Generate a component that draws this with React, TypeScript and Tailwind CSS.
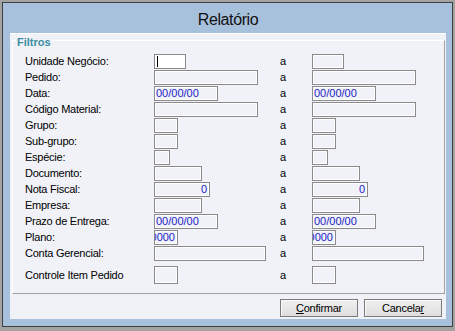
type Field = {
  label: string;
  width: number;
  value?: string;
  align?: "left" | "right";
  focused?: boolean;
};

const fields: Field[] = [
  { label: "Unidade Negócio:", width: 32, focused: true },
  { label: "Pedido:", width: 104 },
  { label: "Data:", width: 64, value: "00/00/00" },
  { label: "Código Material:", width: 104 },
  { label: "Grupo:", width: 24 },
  { label: "Sub-grupo:", width: 24 },
  { label: "Espécie:", width: 16 },
  { label: "Documento:", width: 48 },
  { label: "Nota Fiscal:", width: 56, value: "0", align: "right" },
  { label: "Empresa:", width: 48 },
  { label: "Prazo de Entrega:", width: 64, value: "00/00/00" },
  { label: "Plano:", width: 24, value: "0000", align: "right" },
  { label: "Conta Gerencial:", width: 112 },
];

function Box({
  width,
  value,
  align,
  focused,
  showCaret,
  tall,
}: {
  width: number;
  value?: string;
  align?: "left" | "right";
  focused?: boolean;
  showCaret?: boolean;
  tall?: boolean;
}) {
  return (
    <div
      style={{ width }}
      className={`flex items-center overflow-hidden border border-[#8a8a8a] shadow-[inset_1px_1px_0_#ffffff,inset_-1px_-1px_0_#ffffff] ${
        tall ? "h-[18px]" : "h-[15px]"
      } ${focused ? "bg-white" : ""} ${
        align === "right" ? "justify-end pr-[2px]" : "justify-start pl-[1px]"
      }`}
    >
      {showCaret && <div className="ml-[1px] h-[11px] w-[1px] shrink-0 bg-black" />}
      {value && (
        <span className="shrink-0 whitespace-nowrap leading-none tracking-normal text-[#2222c8]">
          {value}
        </span>
      )}
    </div>
  );
}

export default function App() {
  return (
    <div className="h-[331px] w-[455px] bg-[#a3a3a3] pb-[4px] pl-[2px] pr-[2px] pt-[2px] font-['Liberation_Sans',Arial,sans-serif] text-[11px] tracking-[-0.25px] text-black">
      <div className="flex h-full flex-col border border-[#404040] bg-[#a7c0dc] pl-[7px] pr-[6px]">
        {/* title */}
        <div className="flex h-[30px] shrink-0 items-center justify-center pt-[4px] text-[16px] tracking-[-0.4px] text-[#111]">
          Relatório
        </div>

        {/* panel */}
        <div className="flex h-[286px] flex-col border-t border-white bg-[#f1f2f8]">
          {/* group box */}
          <div className="relative ml-[2px] mr-[1px] mt-[6px] h-[254px] border-b border-l border-r border-t border-b-[#a0a0a0] border-l-white border-r-[#a0a0a0] border-t-white pb-[9px] pl-[12px] pt-[13px]">
            <div className="absolute -top-[4px] left-[3px] bg-[#f1f2f8] px-[1px] text-[11px] font-bold leading-[11px] tracking-normal text-[#3a8fa0]">
              Filtros
            </div>

            <div className="flex flex-col">
              {fields.map((f) => (
                <div key={f.label} className="flex h-[16px] items-start">
                  <div className="flex h-[15px] w-[129px] items-center leading-none">
                    {f.label}
                  </div>
                  <div className="w-[126px]">
                    <Box
                      width={f.width}
                      value={f.value}
                      align={f.align}
                      focused={f.focused}
                      showCaret={f.focused}
                    />
                  </div>
                  <div className="flex h-[15px] w-[32px] items-center leading-none">a</div>
                  <Box width={f.width} value={f.value} align={f.align} />
                </div>
              ))}

              <div className="mt-[4px] flex h-[18px] items-center">
                <div className="w-[129px] leading-none">Controle Item Pedido</div>
                <div className="w-[126px]">
                  <Box width={24} tall />
                </div>
                <div className="w-[32px] leading-none">a</div>
                <Box width={24} tall />
              </div>
            </div>
          </div>

          {/* buttons */}
          <div className="mt-[5px] flex justify-end gap-[6px] pr-[4px]">
            <button className="flex h-[18px] w-[78px] items-center justify-center border border-[#7a7a7a] bg-gradient-to-b from-[#f0f0f0] to-[#dedede] leading-none shadow-[inset_1px_1px_0_#fafafa]">
              <span>
                <u>C</u>onfirmar
              </span>
            </button>
            <button className="flex h-[18px] w-[78px] items-center justify-center border border-[#7a7a7a] bg-gradient-to-b from-[#f0f0f0] to-[#dedede] leading-none shadow-[inset_1px_1px_0_#fafafa]">
              <span>
                Cancela<u>r</u>
              </span>
            </button>
          </div>
        </div>
      </div>
    </div>
  );
}
